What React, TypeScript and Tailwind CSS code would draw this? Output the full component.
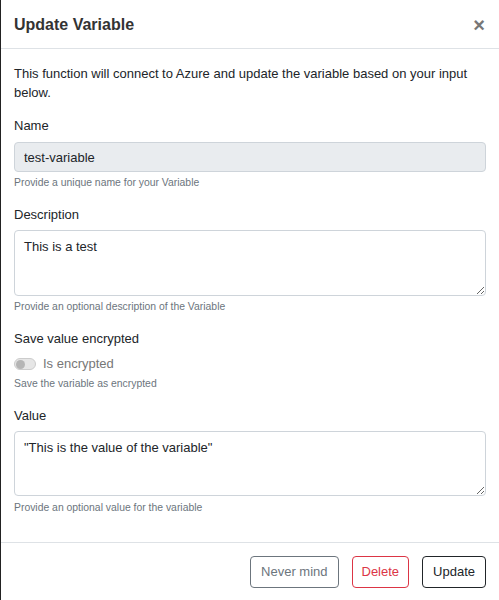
export default function App() {
  return (
    <div className="w-[499px] h-[600px] bg-white border-l border-l-[#222] flex flex-col text-[#212529] font-['Liberation_Sans',Arial,sans-serif]">
      <div className="h-[49px] shrink-0 flex items-center justify-between pl-[13px] pr-[14px] pt-[2px] border-b border-[#dee2e6]">
        <h1 className="text-[16px] font-bold text-[#333]">Update Variable</h1>
        <button className="text-[20px] font-bold text-[#777] leading-none">×</button>
      </div>
      <div className="px-[13px] pt-[15px] flex-1">
        <p className="text-[13px] leading-[19px]">
          This function will connect to Azure and update the variable based on your input below.
        </p>

        <label className="block text-[13px] leading-[20px] mt-[14px]">Name</label>
        <input
          disabled
          value="test-variable"
          className="mt-[6px] block w-full h-[30px] px-[9px] rounded-[4px] border border-[#ced4da] bg-[#e9ecef] text-[13px] text-[#212529]"
        />
        <p className="text-[10.4px] leading-[14px] text-[#6c757d] mt-[4px]">Provide a unique name for your Variable</p>

        <label className="block text-[13px] leading-[20px] mt-[15px]">Description</label>
        <textarea
          defaultValue="This is a test"
          className="mt-[5px] block w-full h-[66px] px-[9px] py-[6px] rounded-[4px] border border-[#ced4da] text-[13px] leading-[19px] text-[#212529]"
        />
        <p className="text-[10.4px] leading-[14px] text-[#6c757d] mt-[4px]">Provide an optional description of the Variable</p>

        <label className="block text-[13px] leading-[20px] mt-[15px]">Save value encrypted</label>
        <div className="flex items-center gap-[7px] mt-[5px] h-[20px]">
          <span className="w-[22px] h-[12px] rounded-full border border-[#ccc] bg-[#e6e6e6] flex items-center px-[1px]">
            <span className="w-[9px] h-[9px] rounded-full bg-[#b5b5b5]" />
          </span>
          <span className="text-[13px] text-[#777]">Is encrypted</span>
        </div>
        <p className="text-[10.4px] leading-[14px] text-[#6c757d] mt-[3px]">Save the variable as encrypted</p>

        <label className="block text-[13px] leading-[20px] mt-[15px]">Value</label>
        <textarea
          defaultValue={'"This is the value of the variable"'}
          className="mt-[5px] block w-full h-[65px] px-[9px] py-[6px] rounded-[4px] border border-[#ced4da] text-[13px] leading-[19px] text-[#212529]"
        />
        <p className="text-[10.4px] leading-[14px] text-[#6c757d] mt-[5px]">Provide an optional value for the variable</p>
      </div>
      <div className="h-[58px] shrink-0 border-t border-[#dee2e6] flex justify-end items-start gap-[13px] px-[13px] pt-[13px]">
        <button className="h-[32px] px-[10px] rounded-[4px] border border-[#6c757d] text-[13px] text-[#6c757d]">Never mind</button>
        <button className="h-[32px] px-[9px] rounded-[4px] border border-[#dc3545] text-[13px] text-[#dc3545]">Delete</button>
        <button className="h-[32px] px-[10px] rounded-[4px] border border-[#212529] text-[13px] text-[#212529]">Update</button>
      </div>
    </div>
  )
}
